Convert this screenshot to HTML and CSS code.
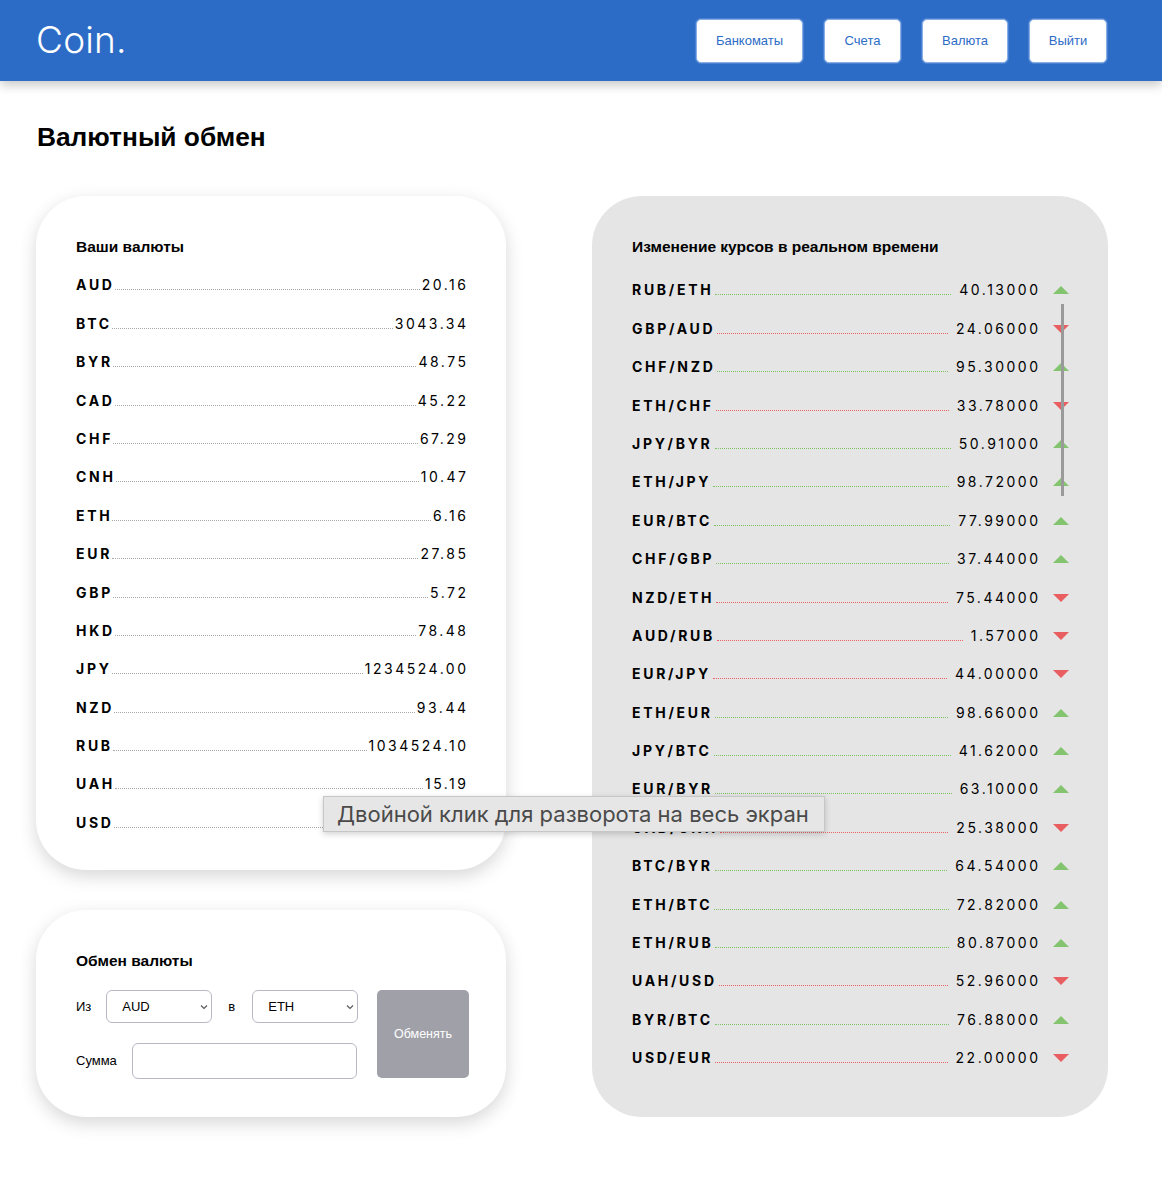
FILE: index.html
```html
<!DOCTYPE html>
<html lang="ru">
<head>
<meta charset="utf-8">
<title>Coin.</title>
<link rel="stylesheet" href="styles.css">
</head>
<body>
<header class="header">
  <div class="logo">Coin.</div>
  <nav class="nav">
    <button class="nav-btn">Банкоматы</button>
    <button class="nav-btn">Счета</button>
    <button class="nav-btn">Валюта</button>
    <button class="nav-btn">Выйти</button>
  </nav>
</header>
<main class="main">
  <h1 class="page-title">Валютный обмен</h1>
  <div class="layout">
    <div class="left-col">
      <section class="card card-white">
        <h2 class="card-title">Ваши валюты</h2>
        <ul class="list">
          <li class="row"><span class="code">AUD</span><span class="leader"></span><span class="val">20.16</span></li>
          <li class="row"><span class="code">BTC</span><span class="leader"></span><span class="val">3043.34</span></li>
          <li class="row"><span class="code">BYR</span><span class="leader"></span><span class="val">48.75</span></li>
          <li class="row"><span class="code">CAD</span><span class="leader"></span><span class="val">45.22</span></li>
          <li class="row"><span class="code">CHF</span><span class="leader"></span><span class="val">67.29</span></li>
          <li class="row"><span class="code">CNH</span><span class="leader"></span><span class="val">10.47</span></li>
          <li class="row"><span class="code">ETH</span><span class="leader"></span><span class="val">6.16</span></li>
          <li class="row"><span class="code">EUR</span><span class="leader"></span><span class="val">27.85</span></li>
          <li class="row"><span class="code">GBP</span><span class="leader"></span><span class="val">5.72</span></li>
          <li class="row"><span class="code">HKD</span><span class="leader"></span><span class="val">78.48</span></li>
          <li class="row"><span class="code">JPY</span><span class="leader"></span><span class="val">1234524.00</span></li>
          <li class="row"><span class="code">NZD</span><span class="leader"></span><span class="val">93.44</span></li>
          <li class="row"><span class="code">RUB</span><span class="leader"></span><span class="val">1034524.10</span></li>
          <li class="row"><span class="code">UAH</span><span class="leader"></span><span class="val">15.19</span></li>
          <li class="row"><span class="code">USD</span><span class="leader"></span><span class="val">23.48</span></li>
        </ul>
      </section>
      <section class="card card-white card-exchange">
        <h2 class="card-title">Обмен валюты</h2>
        <form class="exchange">
          <div class="fields">
            <div class="field-row">
              <span class="flabel">Из</span>
              <span class="select-wrap">
                <select class="select"><option>AUD</option></select>
                <svg class="chev" width="8" height="6" viewBox="0 0 8 6"><path d="M1 1.5 L4 4.5 L7 1.5" fill="none" stroke="#555" stroke-width="1.1"/></svg>
              </span>
              <span class="flabel flabel-in">в</span>
              <span class="select-wrap">
                <select class="select"><option>ETH</option></select>
                <svg class="chev" width="8" height="6" viewBox="0 0 8 6"><path d="M1 1.5 L4 4.5 L7 1.5" fill="none" stroke="#555" stroke-width="1.1"/></svg>
              </span>
            </div>
            <div class="field-row">
              <span class="flabel">Сумма</span>
              <input class="input" type="text">
            </div>
          </div>
          <button type="button" class="submit">Обменять</button>
        </form>
      </section>
    </div>
    <section class="card card-gray">
      <h2 class="card-title">Изменение курсов в реальном времени</h2>
      <ul class="list list-rates">
        <li class="row up"><span class="code">RUB/ETH</span><span class="leader"></span><span class="val">40.13000</span><span class="tri"></span></li>
        <li class="row down"><span class="code">GBP/AUD</span><span class="leader"></span><span class="val">24.06000</span><span class="tri"></span></li>
        <li class="row up"><span class="code">CHF/NZD</span><span class="leader"></span><span class="val">95.30000</span><span class="tri"></span></li>
        <li class="row down"><span class="code">ETH/CHF</span><span class="leader"></span><span class="val">33.78000</span><span class="tri"></span></li>
        <li class="row up"><span class="code">JPY/BYR</span><span class="leader"></span><span class="val">50.91000</span><span class="tri"></span></li>
        <li class="row up"><span class="code">ETH/JPY</span><span class="leader"></span><span class="val">98.72000</span><span class="tri"></span></li>
        <li class="row up"><span class="code">EUR/BTC</span><span class="leader"></span><span class="val">77.99000</span><span class="tri"></span></li>
        <li class="row up"><span class="code">CHF/GBP</span><span class="leader"></span><span class="val">37.44000</span><span class="tri"></span></li>
        <li class="row down"><span class="code">NZD/ETH</span><span class="leader"></span><span class="val">75.44000</span><span class="tri"></span></li>
        <li class="row down"><span class="code">AUD/RUB</span><span class="leader"></span><span class="val">1.57000</span><span class="tri"></span></li>
        <li class="row down"><span class="code">EUR/JPY</span><span class="leader"></span><span class="val">44.00000</span><span class="tri"></span></li>
        <li class="row up"><span class="code">ETH/EUR</span><span class="leader"></span><span class="val">98.66000</span><span class="tri"></span></li>
        <li class="row up"><span class="code">JPY/BTC</span><span class="leader"></span><span class="val">41.62000</span><span class="tri"></span></li>
        <li class="row up"><span class="code">EUR/BYR</span><span class="leader"></span><span class="val">63.10000</span><span class="tri"></span></li>
        <li class="row down"><span class="code">CAD/CNH</span><span class="leader"></span><span class="val">25.38000</span><span class="tri"></span></li>
        <li class="row up"><span class="code">BTC/BYR</span><span class="leader"></span><span class="val">64.54000</span><span class="tri"></span></li>
        <li class="row up"><span class="code">ETH/BTC</span><span class="leader"></span><span class="val">72.82000</span><span class="tri"></span></li>
        <li class="row up"><span class="code">ETH/RUB</span><span class="leader"></span><span class="val">80.87000</span><span class="tri"></span></li>
        <li class="row down"><span class="code">UAH/USD</span><span class="leader"></span><span class="val">52.96000</span><span class="tri"></span></li>
        <li class="row up"><span class="code">BYR/BTC</span><span class="leader"></span><span class="val">76.88000</span><span class="tri"></span></li>
        <li class="row down"><span class="code">USD/EUR</span><span class="leader"></span><span class="val">22.00000</span><span class="tri"></span></li>
      </ul>
      <div class="scrollbar"></div>
    </section>
  </div>
  <div class="tooltip">Двойной клик для разворота на весь экран</div>
</main>
</body>
</html>
```

FILE: styles.css
```css
* { box-sizing: border-box; }

body {
  margin: 0;
  font-family: "Liberation Sans", Arial, sans-serif;
  color: #000;
  background: #fff;
}

.header {
  height: 81px;
  background: #2d6cc6;
  display: flex;
  align-items: center;
  justify-content: space-between;
  padding: 0 55px 0 36px;
  box-shadow: 0 4px 10px rgba(0, 0, 0, 0.22);
  position: relative;
  z-index: 2;
}

.logo {
  font-family: Inter, "Noto Sans", sans-serif;
  font-weight: 300;
  font-size: 37px;
  color: #fff;
  letter-spacing: 0.2px;
  margin-top: -2px;
}

.nav {
  display: flex;
  gap: 21px;
}

.nav-btn {
  height: 44px;
  padding: 0;
  background: #fff;
  border: 1px solid #8aaee4;
  box-shadow: 0 0 0 1px #4a82d3;
  border-radius: 5px;
  color: #2d6cc6;
  font-family: "Liberation Sans", Arial, sans-serif;
  font-size: 13px;
}
.nav-btn:nth-child(1) { width: 107px; }
.nav-btn:nth-child(2) { width: 77px; }
.nav-btn:nth-child(3) { width: 86px; }
.nav-btn:nth-child(4) { width: 78px; }

.main {
  position: relative;
  padding: 0 54px 60px 36px;
}

.page-title {
  margin: 0;
  padding: 41px 0 44px 1px;
  font-size: 26.3px;
  line-height: 30px;
  font-weight: 700;
}

.layout {
  display: grid;
  grid-template-columns: 470px 516px;
  column-gap: 86px;
  align-items: stretch;
}

.left-col {
  display: flex;
  flex-direction: column;
  gap: 40px;
}

.card {
  border-radius: 50px;
  padding: 42px 40px 38px 40px;
  position: relative;
}

.card-white {
  background: #fff;
  box-shadow: 0 6px 18px rgba(0, 0, 0, 0.16);
}

.card-exchange {
  padding-right: 37px;
}

.card-gray {
  background: #e5e5e5;
  padding-right: 39px;
}

.card-title {
  margin: 0;
  font-size: 15.5px;
  line-height: 18px;
  font-weight: 700;
}

.list {
  list-style: none;
  margin: 20px 0 0;
  padding: 0;
  display: flex;
  flex-direction: column;
  gap: 20px;
}

.list-rates {
  margin-top: 25px;
}

.row {
  display: flex;
  align-items: flex-end;
  height: 18.4px;
  font-family: Inter, "Noto Sans", sans-serif;
  font-size: 14px;
  line-height: 18px;
}

.code {
  font-weight: 700;
  letter-spacing: 2.7px;
}

.val {
  letter-spacing: 2.5px;
  margin-right: -2.5px;
}

.leader {
  flex: 1;
  border-bottom: 1px dotted #a8a8a8;
  margin: 0 2px 4px 0;
}

.list-rates .leader {
  margin: 0 8px 4px 2px;
}
.up .leader { border-bottom-color: #78c45f; }
.down .leader { border-bottom-color: #ec6262; }

.tri {
  width: 0;
  height: 0;
  margin-left: 15px;
  margin-bottom: 5px;
  border-left: 8px solid transparent;
  border-right: 8px solid transparent;
}
.up .tri { border-bottom: 8px solid #84c46f; }
.down .tri { border-top: 8px solid #e95e61; }

.scrollbar {
  position: absolute;
  left: 469px;
  top: 108px;
  width: 3px;
  height: 192px;
  background: #9a9a9a;
}

.exchange {
  display: flex;
  gap: 20px;
  margin-top: 20px;
}

.fields {
  width: 281px;
  flex: none;
  display: flex;
  flex-direction: column;
  gap: 20px;
}

.field-row {
  display: flex;
  align-items: center;
  gap: 15px;
}

.flabel {
  font-size: 13px;
  color: #000;
}

.flabel-in {
  margin: 0 2px 0 1px;
}

.select-wrap {
  position: relative;
  display: block;
}

.select {
  appearance: none;
  -webkit-appearance: none;
  width: 106px;
  height: 33px;
  border: 1px solid #b9b9c6;
  border-radius: 6px;
  background: #fff;
  padding: 0 0 0 15px;
  font-family: "Liberation Sans", Arial, sans-serif;
  font-size: 13px;
  color: #000;
}

.chev {
  position: absolute;
  right: 4px;
  top: 14px;
}

.input {
  flex: 1;
  height: 36px;
  border: 1px solid #b9b9c6;
  border-radius: 6px;
  background: #fff;
}

.submit {
  width: 92px;
  height: 88px;
  flex: none;
  border: 0;
  border-radius: 5px;
  background: #a0a0a8;
  color: #fff;
  font-family: "Liberation Sans", Arial, sans-serif;
  font-size: 12.5px;
}

.tooltip {
  position: absolute;
  left: 323px;
  top: 715px;
  width: 502px;
  height: 36px;
  background: #e6e6e6;
  border: 1px solid #c6c6c6;
  box-shadow: 0 2px 6px rgba(0, 0, 0, 0.18);
  font-family: Inter, "Noto Sans", sans-serif;
  font-size: 22px;
  line-height: 34px;
  color: #4a4a4a;
  padding-left: 13px;
  white-space: nowrap;
}
```
